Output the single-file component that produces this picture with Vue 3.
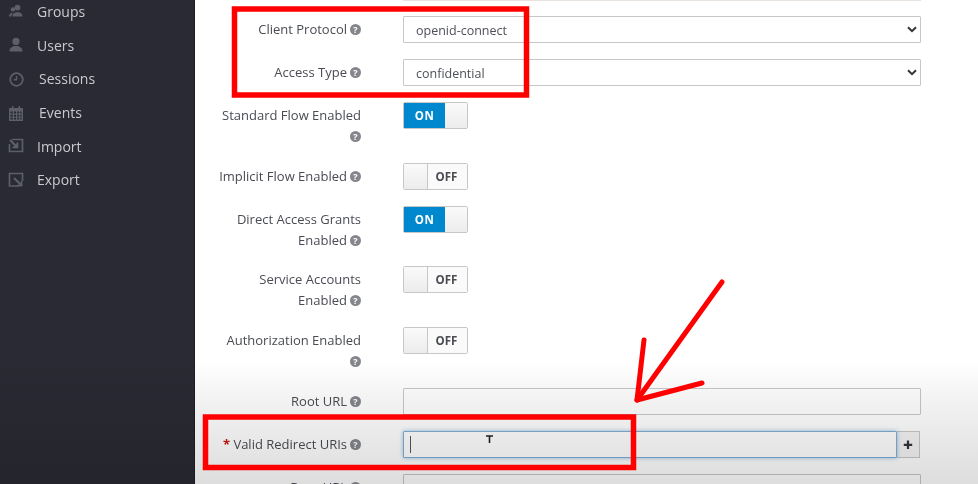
<script setup>
const nav = [
  { label: 'Groups', key: 'groups' },
  { label: 'Users', key: 'users' },
  { label: 'Sessions', key: 'sessions', wide: true },
  { label: 'Events', key: 'events', wide: true },
  { label: 'Import', key: 'import' },
  { label: 'Export', key: 'export' }
]
const toggles = [
  { label: 'Standard Flow Enabled', on: true },
  { label: 'Implicit Flow Enabled', on: false },
  { label: 'Direct Access Grants Enabled', on: true },
  { label: 'Service Accounts Enabled', on: false },
  { label: 'Authorization Enabled', on: false }
]
</script>

<template>
  <div class="screen">
    <aside class="sidebar">
      <ul class="nav">
        <li v-for="item in nav" :key="item.key" class="nav-item">
          <svg class="nav-icon" viewBox="0 0 16 16">
            <g v-if="item.key === 'groups'" fill="#5c5f67">
              <circle cx="9.5" cy="3.6" r="2.9" />
              <path d="M4.5 12.5c0-3 2-3.6 3.4-4.3h3.2c1.4.7 3.4 1.3 3.4 4.3z" />
              <circle cx="5" cy="5.4" r="2.2" />
              <path d="M1 12.5c0-2.6 1.4-3.2 2.8-3.8l1.2.6c-1 .8-1.6 1.8-1.6 3.2z" />
            </g>
            <g v-else-if="item.key === 'users'" fill="#5c5f67">
              <circle cx="8" cy="4.4" r="3.6" />
              <path d="M1.5 14.5c0-4 2.5-4.6 4.6-5.6h3.8c2.1 1 4.6 1.6 4.6 5.6z" />
            </g>
            <g v-else-if="item.key === 'sessions'" fill="none" stroke="#5c5f67">
              <circle cx="8.5" cy="8.5" r="6.3" stroke-width="1.8" />
              <path d="M8.5 5v3.8H5.8" stroke-width="1.4" />
            </g>
            <g v-else-if="item.key === 'events'" fill="#5c5f67">
              <path d="M1 3h14v13H1z" />
              <path d="M4 1h1.500v3H4zM10.500 1H12v3h-1.500z" />
              <path d="M2.500 6.500h2.300v2H2.500zM6 6.500h2v2H6zM9.200 6.500h2v2h-2zM12.300 6.500h1.300v2h-1.300zM2.500 9.700h2.300v2H2.500zM6 9.700h2v2H6zM9.200 9.700h2v2h-2zM12.300 9.700h1.300v2h-1.300zM2.500 12.800h2.300v1.600H2.500zM6 12.800h2v1.600H6zM9.200 12.800h2v1.600h-2zM12.300 12.800h1.300v1.600h-1.300z" fill="#292a33" />
            </g>
            <g v-else-if="item.key === 'import'" fill="none" stroke="#5c5f67" stroke-width="1.7">
              <path d="M4 1.500h10.500v12H1.500V6" />
              <path d="M2 2l6.500 6.500" stroke-width="2.2" />
              <path d="M4.500 9.500h5v-5" fill="#5c5f67" />
            </g>
            <g v-else fill="none" stroke="#5c5f67" stroke-width="1.7">
              <path d="M11 14H1.500V1.500h13V9" />
              <path d="M6 6l8 8" stroke-width="2.2" />
              <path d="M9 13.500h4.500V9" />
            </g>
          </svg>
          <span class="nav-label" :class="{ wide: item.wide }">{{ item.label }}</span>
        </li>
      </ul>
    </aside>

    <main class="content">
      <div class="previous"><span></span><div class="previous-edge"></div></div>

      <div class="row">
        <label class="label">Client Protocol<span class="help">?</span></label>
        <div class="select-wrap">
          <select class="control select"><option>openid-connect</option></select>
          <svg class="chevron" viewBox="0 0 10 7"><path d="M1 1.200 5 5.200l4-4" /></svg>
        </div>
      </div>

      <div class="row">
        <label class="label">Access Type<span class="help">?</span></label>
        <div class="select-wrap">
          <select class="control select"><option>confidential</option></select>
          <svg class="chevron" viewBox="0 0 10 7"><path d="M1 1.200 5 5.200l4-4" /></svg>
        </div>
      </div>

      <div v-for="t in toggles" :key="t.label" class="row">
        <label class="label">{{ t.label }}<span class="help">?</span></label>
        <div class="toggle" :class="{ on: t.on }">
          <template v-if="t.on">
            <span class="state state-on">ON</span><span class="knob"></span>
          </template>
          <template v-else>
            <span class="knob"></span><span class="state state-off">OFF</span>
          </template>
        </div>
      </div>

      <div class="row">
        <label class="label">Root URL<span class="help">?</span></label>
        <input class="control input" type="text" />
      </div>

      <div class="row">
        <label class="label"><span class="required">*</span> Valid Redirect URIs<span class="help">?</span></label>
        <div class="input-group">
          <div class="control input focused">
            <span class="caret"></span>
            <svg class="ibeam" viewBox="0 0 9 9"><path d="M1 1h7M4.500 1v7" /></svg>
          </div>
          <button class="add" type="button">+</button>
        </div>
      </div>

      <div class="row">
        <label class="label">Base URL<span class="help">?</span></label>
        <input class="control input" type="text" />
      </div>
    </main>

    <div class="shade"></div>

    <svg class="marks" viewBox="0 0 978 484">
      <rect x="234.500" y="9" width="292" height="86" />
      <rect x="205.500" y="417" width="428" height="50.500" />
      <path class="arrow" d="M722 282 637 400" />
      <path class="arrow" d="M644 340 637 400 702 383" />
    </svg>
  </div>
</template>

<style>
html, body { margin: 0; padding: 0; background: #fff; }
</style>

<style scoped>
.screen {
  position: relative;
  display: flex;
  width: 978px;
  height: 484px;
  overflow: hidden;
  background: #fff;
  font-family: "Open Sans", "Liberation Sans", sans-serif;
  font-size: 13px;
  color: #4a4c54;
  filter: blur(0.45px);
}
.sidebar {
  flex: 0 0 195px;
  background: #292a33;
  border-right: 1px solid #1d1e24;
  box-sizing: border-box;
}
.nav {
  list-style: none;
  margin: -5px 0 0;
  padding: 0;
}
.nav-item {
  display: flex;
  align-items: center;
  height: 33.600px;
  padding-left: 8px;
  color: #c9cad0;
  font-size: 14px;
}
.nav-icon { width: 16px; height: 16px; flex: none; }
.nav-label { margin-left: 13px; }
.nav-label.wide { margin-left: 15px; }

.content {
  flex: 1;
  padding-left: 20px;
  padding-right: 57px;
  min-width: 0;
}
.previous {
  display: grid;
  grid-template-columns: 146px 1fr;
  column-gap: 42px;
  height: 1px;
  margin-bottom: 15.450px;
}
.previous-edge { background: #e8e3de; }
.row {
  display: grid;
  grid-template-columns: 146px 1fr;
  column-gap: 42px;
  align-items: start;
  margin-bottom: 15.800px;
}
.label {
  display: block;
  text-align: right;
  line-height: 21px;
  padding-top: 3px;
}
.help {
  display: inline-block;
  width: 11px;
  height: 11px;
  margin-left: 3px;
  border-radius: 50%;
  background: #84868c;
  color: #fff;
  font-size: 9px;
  font-weight: 700;
  line-height: 11px;
  text-align: center;
  vertical-align: 1px;
}
.required { color: #c9190b; font-weight: 700; }

.control {
  display: block;
  box-sizing: border-box;
  width: 100%;
  height: 27px;
  border: 1px solid #c7c7c7;
  border-radius: 1px;
  background: #fff;
  color: #4d5058;
  font: inherit;
}
.select-wrap { position: relative; }
.select {
  appearance: none;
  padding: 1px 30px 0 12px;
  outline: none;
  font-size: 12.500px;
}
.chevron {
  position: absolute;
  right: 4px;
  top: 10px;
  width: 10px;
  height: 7px;
  fill: none;
  stroke: #33353b;
  stroke-width: 2;
}

.toggle {
  display: flex;
  box-sizing: border-box;
  width: 65px;
  height: 27px;
  border: 1px solid #c7c7c7;
  border-radius: 2px;
  background: #f3f3f3;
}
.state {
  display: flex;
  align-items: center;
  justify-content: center;
  font-size: 11.500px;
  font-weight: 700;
}
.state-on { width: 41px; background: #0088ce; color: #fff; letter-spacing: 0.500px; }
.state-off { flex: 1; color: #4a4c52; background: #fafafa; border-left: 1px solid #c7c7c7; padding-right: 2px; }
.knob {
  flex: 1;
  background: linear-gradient(#fafafa, #ececec);
}
.toggle:not(.on) .knob { flex: 0 0 23px; }

.input { padding: 0 10px; outline: none; }
.input-group { display: flex; width: 517px; }
.focused {
  position: relative;
  flex: 1;
  width: auto;
  border-color: #7dafd6;
  box-shadow: 0 0 4px rgba(70, 140, 200, 0.55);
}
.caret {
  position: absolute;
  left: 6px;
  top: 4px;
  width: 1px;
  height: 17px;
  background: #555;
}
.ibeam {
  position: absolute;
  left: 81px;
  top: 3px;
  width: 9px;
  height: 9px;
  fill: none;
  stroke: #222;
  stroke-width: 1.600;
}
.add {
  flex: 0 0 23px;
  box-sizing: border-box;
  height: 27px;
  padding: 0;
  border: 1px solid #c7c7c7;
  border-left: 0;
  background: #f4f4f4;
  color: #33353b;
  font-family: "Open Sans", sans-serif;
  font-size: 17px;
  font-weight: 800;
  line-height: 23px;
}

.shade {
  position: absolute;
  inset: 0;
  pointer-events: none;
  background: linear-gradient(rgba(0, 0, 0, 0) 0, rgba(0, 0, 0, 0) 362px, rgba(0, 0, 0, 0.05) 400px, rgba(0, 0, 0, 0.135) 484px);
}
.marks {
  position: absolute;
  inset: 0;
  width: 978px;
  height: 484px;
  pointer-events: none;
  fill: none;
  stroke: #fe0000;
  stroke-width: 5.500;
}
.arrow {
  stroke-width: 5;
  stroke-linecap: round;
  stroke-linejoin: round;
}
</style>
